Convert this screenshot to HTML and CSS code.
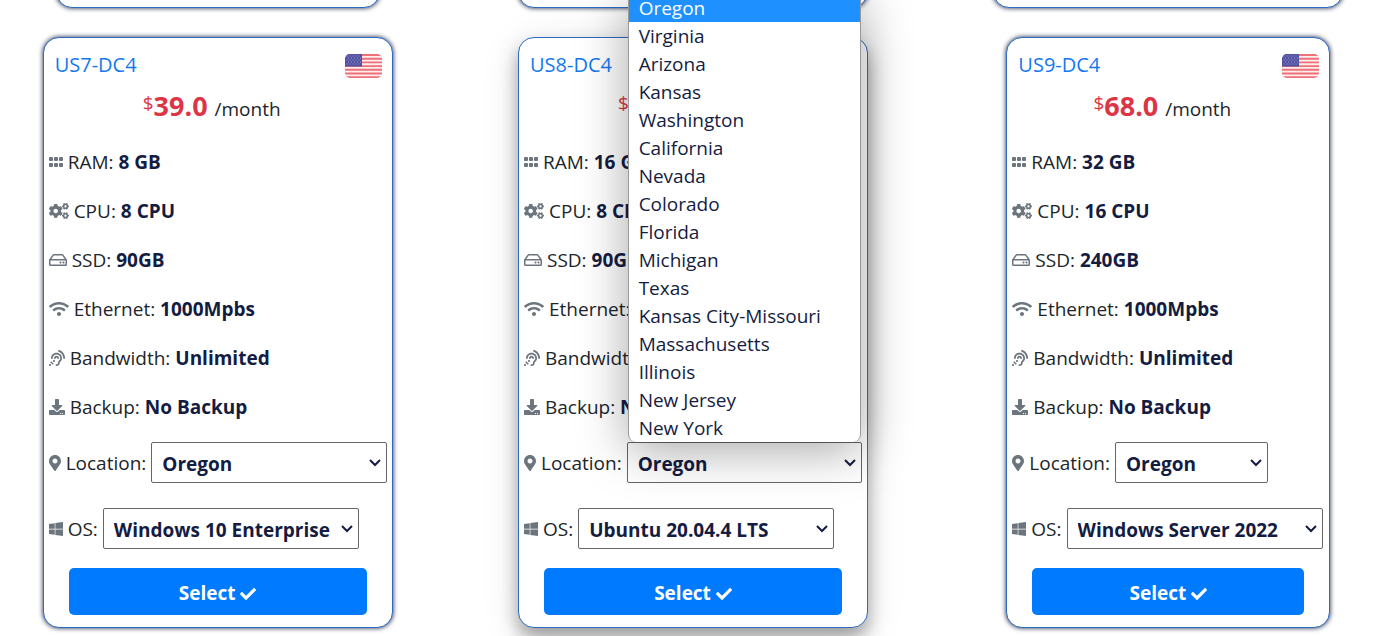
FILE: index.html
```
<!DOCTYPE html>
<html lang="en">
<head>
    <meta charset="UTF-8">
    <meta name="viewport" content="width=device-width, initial-scale=1.0">
    <title>VPS Plans</title>
    <link rel="stylesheet" href="styles.css">
</head>
<body>
    <!-- icons shared by all the cards -->
    <svg class="sprite" aria-hidden="true">
        <symbol id="i-ram" viewBox="0 0 448 512"><rect y="96" width="128" height="128" rx="32"/><rect x="160" y="96" width="128" height="128" rx="32"/><rect x="320" y="96" width="128" height="128" rx="32"/><rect y="288" width="128" height="128" rx="32"/><rect x="160" y="288" width="128" height="128" rx="32"/><rect x="320" y="288" width="128" height="128" rx="32"/></symbol>
        <symbol id="i-cpu" viewBox="0 0 640 512">
            <path id="small-cog" d="M512.1 191l-8.2 14.3c-3 5.3-9.4 7.5-15.1 5.4-11.8-4.4-22.6-10.7-32.1-18.6-4.6-3.8-5.8-10.5-2.8-15.7l8.2-14.3c-6.9-8-12.3-17.3-15.9-27.4h-16.5c-6 0-11.2-4.3-12.2-10.3-2-12-2.1-24.6 0-37.1 1-6 6.2-10.4 12.2-10.4h16.5c3.6-10.1 9-19.4 15.9-27.4l-8.2-14.3c-3-5.2-1.9-11.9 2.8-15.7 9.5-7.9 20.4-14.2 32.1-18.6 5.7-2.1 12.1.1 15.1 5.4l8.2 14.3c10.5-1.9 21.2-1.9 31.7 0L552 6.3c3-5.3 9.4-7.5 15.1-5.4 11.8 4.4 22.6 10.7 32.1 18.6 4.6 3.8 5.8 10.5 2.8 15.7l-8.2 14.3c6.9 8 12.3 17.3 15.9 27.4h16.5c6 0 11.2 4.3 12.2 10.3 2 12 2.1 24.6 0 37.1-1 6-6.2 10.4-12.2 10.4h-16.5c-3.6 10.1-9 19.4-15.9 27.4l8.2 14.3c3 5.2 1.9 11.9-2.8 15.7-9.5 7.9-20.4 14.2-32.1 18.6-5.7 2.1-12.1-.1-15.1-5.4l-8.2-14.3c-10.4 1.9-21.2 1.9-31.7 0zm-10.5-58.8c38.5 29.6 82.4-14.3 52.8-52.8-38.5-29.7-82.4 14.3-52.8 52.8z"/>
            <use href="#small-cog" y="299"/>
            <path d="M386.3 286.1l33.7 16.8c10.1 5.8 14.5 18.1 10.5 29.1-8.9 24.2-26.4 46.4-42.6 65.8-7.4 8.9-20.2 11.1-30.3 5.3l-29.1-16.8c-16 13.7-34.6 24.6-54.9 31.7v33.6c0 11.6-8.3 21.6-19.7 23.6-24.6 4.2-50.4 4.4-75.9 0-11.5-2-20-11.9-20-23.6V418c-20.3-7.2-38.9-18-54.9-31.7L74 403c-10 5.8-22.9 3.6-30.3-5.3-16.2-19.4-33.3-41.6-42.2-65.7-4-10.9.4-23.2 10.5-29.1l33.3-16.8c-3.9-20.9-3.9-42.4 0-63.4L12 205.8c-10.1-5.8-14.6-18.1-10.5-29 8.9-24.2 26-46.4 42.2-65.8 7.4-8.9 20.2-11.1 30.3-5.3l29.1 16.8c16-13.7 34.6-24.6 54.9-31.7V57.1c0-11.5 8.2-21.5 19.6-23.5 24.6-4.2 50.5-4.4 76-.1 11.5 2 20 11.9 20 23.6v33.6c20.3 7.2 38.9 18 54.9 31.7l29.1-16.8c10-5.8 22.9-3.6 30.3 5.3 16.2 19.4 33.2 41.6 42.1 65.8 4 10.9.1 23.2-10 29.1l-33.7 16.8c3.9 21 3.9 42.5 0 63.5zm-117.6 21.1c59.2-77-28.7-164.9-105.7-105.7-59.2 77 28.7 164.9 105.7 105.7z"/>
        </symbol>
        <symbol id="i-ssd" viewBox="0 0 576 512"><path d="M567.4 235.6L462.3 84.6A48 48 0 0 0 422.9 64H153.1a48 48 0 0 0-39.4 20.6L8.6 235.6A48 48 0 0 0 0 263v137c0 26.5 21.5 48 48 48h480c26.5 0 48-21.5 48-48V263c0-9.8-3-19.4-8.6-27.4zM153.1 112h269.8l77.9 112H75.2l77.9-112zM528 400H48V272h480v128zm-32-64c0 17.7-14.3 32-32 32s-32-14.3-32-32 14.3-32 32-32 32 14.3 32 32zm-96 0c0 17.7-14.3 32-32 32s-32-14.3-32-32 14.3-32 32-32 32 14.3 32 32z"/></symbol>
        <symbol id="i-net" viewBox="0 0 640 512"><path d="M634.91 154.88C457.74-8.99 182.19-8.93 5.09 154.88c-6.66 6.16-6.79 16.59-.35 22.98l34.24 33.97c6.14 6.1 16.02 6.23 22.4.38 145.92-133.68 371.3-133.71 517.25 0 6.38 5.85 16.26 5.71 22.4-.38l34.24-33.97c6.43-6.39 6.3-16.82-.36-22.98zM320 352c-35.35 0-64 28.65-64 64s28.65 64 64 64 64-28.65 64-64-28.65-64-64-64zm202.67-83.59c-115.26-101.93-290.21-101.82-405.34 0-6.9 6.1-7.12 16.69-.57 23.15l34.44 33.99c6 5.92 15.66 6.32 22.05.8 83.95-72.57 209.74-72.41 293.49 0 6.39 5.52 16.05 5.13 22.05-.8l34.44-33.99c6.56-6.46 6.33-17.06-.56-23.15z"/></symbol>
        <symbol id="i-band" viewBox="0 0 512 512"><path d="M216 260c0 15.464-12.536 28-28 28s-28-12.536-28-28c0-44.112 35.888-80 80-80s80 35.888 80 80c0 15.464-12.536 28-28 28s-28-12.536-28-28c0-13.234-10.767-24-24-24s-24 10.766-24 24zm24-176c-97.047 0-176 78.953-176 176 0 15.464 12.536 28 28 28s28-12.536 28-28c0-66.168 53.832-120 120-120s120 53.832 120 120c0 75.164-71.009 70.311-71.997 143.622L288 404c0 28.673-23.327 52-52 52-15.464 0-28 12.536-28 28s12.536 28 28 28c59.475 0 107.876-48.328 108-107.774.595-34.428 72-48.24 72-144.226 0-97.047-78.953-176-176-176zm-80 236c-17.673 0-32 14.327-32 32s14.327 32 32 32 32-14.327 32-32-14.327-32-32-32zM32 448c-17.673 0-32 14.327-32 32s14.327 32 32 32 32-14.327 32-32-14.327-32-32-32zm480-187.993c0-1.518-.012-3.025-.045-4.531C510.076 140.525 436.157 38.47 327.994 1.511c-14.633-4.998-30.549 2.809-35.55 17.442-5 14.633 2.81 30.549 17.442 35.55 85.906 29.354 144.61 110.513 146.077 201.953l.003.188c.026 1.118.033 2.236.033 3.363 0 15.464 12.536 28 28 28s28.001-12.536 28.001-28zM152.971 439.029l-80-80L39.03 392.97l80 80 33.941-33.941z"/></symbol>
        <symbol id="i-backup" viewBox="0 0 512 512"><path d="M216 0h80c13.3 0 24 10.7 24 24v168h87.7c17.8 0 26.7 21.5 14.1 34.1L269.7 378.3c-7.5 7.5-19.8 7.5-27.3 0L90.1 226.1c-12.6-12.6-3.7-34.1 14.1-34.1H192V24c0-13.3 10.7-24 24-24zm296 376v112c0 13.3-10.7 24-24 24H24c-13.3 0-24-10.7-24-24V376c0-13.3 10.7-24 24-24h146.7l49 49c20.1 20.1 52.5 20.1 72.6 0l49-49H488c13.3 0 24 10.7 24 24zm-124 88c0-11-9-20-20-20s-20 9-20 20 9 20 20 20 20-9 20-20zm64 0c0-11-9-20-20-20s-20 9-20 20 9 20 20 20 20-9 20-20z"/></symbol>
        <symbol id="i-pin" viewBox="0 0 384 512"><path d="M172.268 501.67C26.97 291.031 0 269.413 0 192 0 85.961 85.961 0 192 0s192 85.961 192 192c0 77.413-26.97 99.031-172.268 309.67-9.535 13.774-29.93 13.773-39.464 0zM192 272c44.183 0 80-35.817 80-80s-35.817-80-80-80-80 35.817-80 80 35.817 80 80 80z"/></symbol>
        <symbol id="i-win" viewBox="0 0 448 512"><path d="M0 93.7l183.6-25.3v177.4H0V93.7zm0 324.6l183.6 25.3V268.4H0v149.9zm203.8 28L448 480V268.4H203.8v177.9zm0-380.6v180.1H448V32L203.8 65.7z"/></symbol>
        <symbol id="i-check" viewBox="0 0 512 512"><path d="M173.898 439.404l-166.4-166.4c-9.997-9.997-9.997-26.206 0-36.204l36.203-36.204c9.997-9.998 26.207-9.998 36.204 0L192 312.69 432.095 72.596c9.997-9.997 26.207-9.997 36.204 0l36.203 36.204c9.997 9.997 9.997 26.206 0 36.204l-294.4 294.401c-9.998 9.997-26.207 9.997-36.204-.001z"/></symbol>
        <symbol id="flag" viewBox="0 0 37 24" preserveAspectRatio="none">
            <rect width="37" height="24" fill="#fdeeee"/>
            <path d="M0 1h37M0 4.7h37M0 8.4h37M0 12.1h37M0 15.8h37M0 19.5h37M0 23.1h37" stroke="#f0707a" stroke-width="1.9"/>
            <rect width="17" height="12.5" fill="#5252a3"/>
            <path d="M1.5 2h15M1.5 6h15M1.5 10h15M3 4h13M3 8h13" stroke="#9c9ccf" stroke-width="1" stroke-dasharray="1 2"/>
        </symbol>
    </svg>

    <div class="plans">
        <div class="card card-prev card-narrow"></div>
        <div class="card card-prev"></div>
        <div class="card card-prev"></div>

        <div class="card">
            <div class="card-head">
                <h2>US7-DC4</h2>
                <svg class="flag"><use href="#flag"/></svg>
            </div>
            <p class="price"><sup>$</sup><b>39.0</b> /month</p>
            <ul class="specs">
                <li><svg class="icon w14"><use href="#i-ram"/></svg>RAM: <b>8 GB</b></li>
                <li><svg class="icon w20"><use href="#i-cpu"/></svg>CPU: <b>8 CPU</b></li>
                <li><svg class="icon w18"><use href="#i-ssd"/></svg>SSD: <b>90GB</b></li>
                <li><svg class="icon w20"><use href="#i-net"/></svg>Ethernet: <b>1000Mpbs</b></li>
                <li><svg class="icon w16"><use href="#i-band"/></svg>Bandwidth: <b>Unlimited</b></li>
                <li><svg class="icon w16"><use href="#i-backup"/></svg>Backup: <b>No Backup</b></li>
            </ul>
            <div class="field">
                <svg class="icon w12"><use href="#i-pin"/></svg>
                <label for="loc7">Location:</label>
                <select id="loc7" class="grow"><option>Oregon</option></select>
            </div>
            <div class="field">
                <svg class="icon w14"><use href="#i-win"/></svg>
                <label for="os7">OS:</label>
                <select id="os7" class="os"><option>Windows 10 Enterprise</option></select>
            </div>
            <button class="btn" type="button">Select <svg class="check"><use href="#i-check"/></svg></button>
        </div>

        <div class="card card-active">
            <div class="card-head">
                <h2>US8-DC4</h2>
                <svg class="flag"><use href="#flag"/></svg>
            </div>
            <p class="price"><sup>$</sup><b>49.0</b> /month</p>
            <ul class="specs">
                <li><svg class="icon w14"><use href="#i-ram"/></svg>RAM: <b>16 GB</b></li>
                <li><svg class="icon w20"><use href="#i-cpu"/></svg>CPU: <b>8 CPU</b></li>
                <li><svg class="icon w18"><use href="#i-ssd"/></svg>SSD: <b>90GB</b></li>
                <li><svg class="icon w20"><use href="#i-net"/></svg>Ethernet: <b>1000Mpbs</b></li>
                <li><svg class="icon w16"><use href="#i-band"/></svg>Bandwidth: <b>Unlimited</b></li>
                <li><svg class="icon w16"><use href="#i-backup"/></svg>Backup: <b>No Backup</b></li>
            </ul>
            <div class="field">
                <svg class="icon w12"><use href="#i-pin"/></svg>
                <label for="loc8">Location:</label>
                <div class="dropdown grow">
                    <select id="loc8"><option>Oregon</option></select>
                    <ul class="menu" role="listbox" aria-label="Location">
                        <li role="option" aria-selected="true" class="selected">Oregon</li>
                        <li role="option">Virginia</li>
                        <li role="option">Arizona</li>
                        <li role="option">Kansas</li>
                        <li role="option">Washington</li>
                        <li role="option">California</li>
                        <li role="option">Nevada</li>
                        <li role="option">Colorado</li>
                        <li role="option">Florida</li>
                        <li role="option">Michigan</li>
                        <li role="option">Texas</li>
                        <li role="option">Kansas City-Missouri</li>
                        <li role="option">Massachusetts</li>
                        <li role="option">Illinois</li>
                        <li role="option">New Jersey</li>
                        <li role="option">New York</li>
                    </ul>
                </div>
            </div>
            <div class="field">
                <svg class="icon w14"><use href="#i-win"/></svg>
                <label for="os8">OS:</label>
                <select id="os8" class="os"><option>Ubuntu 20.04.4 LTS</option></select>
            </div>
            <button class="btn" type="button">Select <svg class="check"><use href="#i-check"/></svg></button>
        </div>

        <div class="card card-narrow">
            <div class="card-head">
                <h2>US9-DC4</h2>
                <svg class="flag"><use href="#flag"/></svg>
            </div>
            <p class="price"><sup>$</sup><b>68.0</b> /month</p>
            <ul class="specs">
                <li><svg class="icon w14"><use href="#i-ram"/></svg>RAM: <b>32 GB</b></li>
                <li><svg class="icon w20"><use href="#i-cpu"/></svg>CPU: <b>16 CPU</b></li>
                <li><svg class="icon w18"><use href="#i-ssd"/></svg>SSD: <b>240GB</b></li>
                <li><svg class="icon w20"><use href="#i-net"/></svg>Ethernet: <b>1000Mpbs</b></li>
                <li><svg class="icon w16"><use href="#i-band"/></svg>Bandwidth: <b>Unlimited</b></li>
                <li><svg class="icon w16"><use href="#i-backup"/></svg>Backup: <b>No Backup</b></li>
            </ul>
            <div class="field">
                <svg class="icon w12"><use href="#i-pin"/></svg>
                <label for="loc9">Location:</label>
                <select id="loc9" class="short"><option>Oregon</option></select>
            </div>
            <div class="field">
                <svg class="icon w14"><use href="#i-win"/></svg>
                <label for="os9">OS:</label>
                <select id="os9" class="os"><option>Windows Server 2022</option></select>
            </div>
            <button class="btn" type="button">Select <svg class="check"><use href="#i-check"/></svg></button>
        </div>
    </div>
</body>
</html>
```
FILE: styles.css
```
* {
    box-sizing: border-box;
}
body {
    margin: 0;
    font-family: "Segoe UI", "Open Sans", "Noto Sans", sans-serif;
    font-size: 19px;
    line-height: 28px;
    color: #212529;
    background: #fff;
    overflow-x: hidden;
}
h2, p, ul {
    margin: 0;
    padding: 0;
}
ul {
    list-style: none;
}
b {
    font-weight: 700;
}
.sprite {
    display: none;
}
.plans {
    display: grid;
    grid-template-columns: repeat(3, 1fr);
    justify-items: center;
    row-gap: 29px;
    margin: 0 -20px;
    padding-bottom: 8px;
}

/* cards */
.card {
    display: flex;
    flex-direction: column;
    width: 350px;
    padding: 12px 5px;
    border: 1px solid #2a6bc4;
    border-radius: 16px;
    background: #fff;
    box-shadow: 0 0 5px #1b2340;
}
.card-narrow {
    width: 324px;
}
/* bottom edge of the row above */
.card-prev {
    height: 48px;
    margin-top: -40px;
}
.card-active {
    box-shadow: 0 10px 18px rgba(0, 0, 0, 0.35), 0 6px 40px rgba(0, 0, 0, 0.1);
}
.card-head {
    display: flex;
    justify-content: space-between;
    align-items: center;
    padding: 0 5px 0 6px;
}
.card-head h2 {
    font-size: 20px;
    font-weight: 500;
    line-height: 30px;
    color: #1478f0;
}
.flag {
    width: 37px;
    height: 24px;
    margin-top: 2px;
    border-radius: 5px;
}
.price {
    height: 57px;
    padding: 8px 12px 0 0;
    line-height: 36px;
    text-align: center;
}
.price b {
    margin-right: 2px;
    font-size: 27px;
    color: #dc3545;
}
.price sup {
    font-size: 19px;
    line-height: 0;
    vertical-align: 6px;
    color: #dc3545;
}
.specs li {
    display: flex;
    align-items: center;
    height: 49px;
    white-space: pre;
}
.specs b, select {
    color: #141c42;
}
.icon {
    flex: none;
    height: 16px;
    margin-right: 5px;
    fill: #6c757d;
}
.w12 { width: 12px; }
.w14 { width: 14px; }
.w16 { width: 16px; }
.w18 { width: 18px; }
.w20 { width: 20px; }

/* drop-downs */
.field {
    display: flex;
    align-items: center;
    margin-top: 11px;
}
.field + .field {
    margin-top: 25px;
}
.field label {
    margin-right: 5px;
}
select {
    width: 100%;
    height: 41px;
    padding: 2px 10px 0;
    border: 1px solid #666;
    border-radius: 2px;
    font-family: inherit;
    font-size: 19px;
    font-weight: 700;
    appearance: none;
    background: transparent url("data:image/svg+xml,%3Csvg xmlns='http://www.w3.org/2000/svg' width='12' height='8'%3E%3Cpath d='M1 1l5 5 5-5' fill='none' stroke='%23141c42' stroke-width='2'/%3E%3C/svg%3E") no-repeat right 5px center;
}
.grow {
    flex: 1;
}
.short {
    width: 153px;
}
.os {
    width: 256px;
}
.dropdown {
    position: relative;
}
.menu {
    position: absolute;
    left: 1px;
    right: 1px;
    bottom: 100%;
    border: 1px solid #999;
    border-width: 0 1px;
    border-radius: 0 0 8px 8px;
    background: #fff;
    color: #141c42;
    overflow: hidden;
    box-shadow: 0 8px 50px rgba(0, 0, 0, 0.35);
}
.menu li {
    padding-left: 10px;
}
.menu .selected {
    background: #1e90ff;
    color: #fff;
}

.btn {
    height: 47px;
    margin: 19px 20px 0;
    padding: 2px 0 0;
    border: none;
    border-radius: 5px;
    background: #007bff;
    color: #fff;
    font-family: inherit;
    font-size: 19px;
    font-weight: 700;
    cursor: pointer;
}
.check {
    width: 16px;
    height: 16px;
    fill: #fff;
    vertical-align: -2px;
}
```
